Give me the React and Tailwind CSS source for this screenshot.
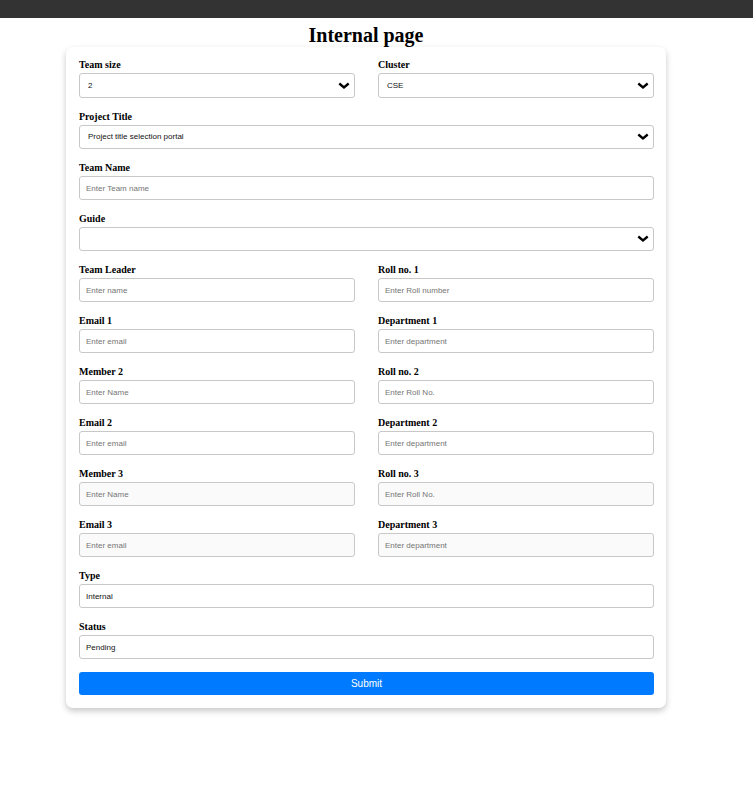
import { useId } from "react";

const control =
  "block w-full rounded-[3px] border border-[#c8c8c8] font-['Liberation_Sans',Arial,sans-serif] text-[8px] leading-[10px] text-[#111]";

function Field({ label, id, children }) {
  return (
    <div className="min-w-0">
      <label htmlFor={id} className="mb-[3px] block text-[10px] leading-[11px] font-bold">
        {label}
      </label>
      {children}
    </div>
  );
}

function TextField({ label, placeholder, value, disabled }) {
  const id = useId();
  return (
    <Field label={label} id={id}>
      <input
        id={id}
        type="text"
        placeholder={placeholder}
        defaultValue={value}
        disabled={disabled}
        className={`${control} h-6 bg-white px-1.5 placeholder:text-[#757575] placeholder:opacity-100 disabled:bg-[#fafafa]`}
      />
    </Field>
  );
}

function SelectField({ label, value, short }) {
  const id = useId();
  return (
    <Field label={label} id={id}>
      <div className="relative">
        <select
          id={id}
          defaultValue={value}
          className={`${control} ${short ? "h-[25px]" : "h-6"} appearance-none bg-white pr-6 pl-2`}
        >
          <option value={value}>{value}</option>
        </select>
        <svg
          viewBox="0 0 12 8"
          className="pointer-events-none absolute inset-y-0 right-[5px] my-auto h-2 w-3"
          fill="none"
          stroke="#000"
          strokeWidth="2.3"
          aria-hidden="true"
        >
          <path d="M1.3 1.5 L6 5.5 L10.7 1.5" />
        </svg>
      </div>
    </Field>
  );
}

function Pair({ children }) {
  return <div className="grid grid-cols-2 gap-x-[23px]">{children}</div>;
}

export default function App() {
  return (
    <div className="min-h-screen bg-white font-['Liberation_Serif','Times_New_Roman',serif] text-black">
      <header className="h-[18px] bg-[#333]" />
      <main className="pr-[21px] pb-10">
        <h1 className="pt-1.5 text-center text-[20px] leading-[23px] font-bold">Internal page</h1>
        <form
          onSubmit={(e) => e.preventDefault()}
          className="mx-auto max-w-[600px] rounded-[7px] bg-white pt-3 pr-3 pb-[13px] pl-[13px] shadow-[0_3px_6px_rgba(0,0,0,0.22)]"
        >
          <div className="flex flex-col gap-[13px]">
            <Pair>
              <SelectField label="Team size" value="2" short />
              <SelectField label="Cluster" value="CSE" short />
            </Pair>
            <SelectField label="Project Title" value="Project title selection portal" />
            <TextField label="Team Name" placeholder="Enter Team name" />
            <SelectField label="Guide" value="" />
            <Pair>
              <TextField label="Team Leader" placeholder="Enter name" />
              <TextField label="Roll no. 1" placeholder="Enter Roll number" />
            </Pair>
            <Pair>
              <TextField label="Email 1" placeholder="Enter email" />
              <TextField label="Department 1" placeholder="Enter department" />
            </Pair>
            <Pair>
              <TextField label="Member 2" placeholder="Enter Name" />
              <TextField label="Roll no. 2" placeholder="Enter Roll No." />
            </Pair>
            <Pair>
              <TextField label="Email 2" placeholder="Enter email" />
              <TextField label="Department 2" placeholder="Enter department" />
            </Pair>
            <Pair>
              <TextField label="Member 3" placeholder="Enter Name" disabled />
              <TextField label="Roll no. 3" placeholder="Enter Roll No." disabled />
            </Pair>
            <Pair>
              <TextField label="Email 3" placeholder="Enter email" disabled />
              <TextField label="Department 3" placeholder="Enter department" disabled />
            </Pair>
            <TextField label="Type" value="Internal" />
            <TextField label="Status" value="Pending" />
            <button
              type="submit"
              className="block h-[23px] w-full rounded-[3px] bg-[#007bff] font-['Liberation_Sans',Arial,sans-serif] text-[10px] leading-[12px] text-white"
            >
              Submit
            </button>
          </div>
        </form>
      </main>
    </div>
  );
}
